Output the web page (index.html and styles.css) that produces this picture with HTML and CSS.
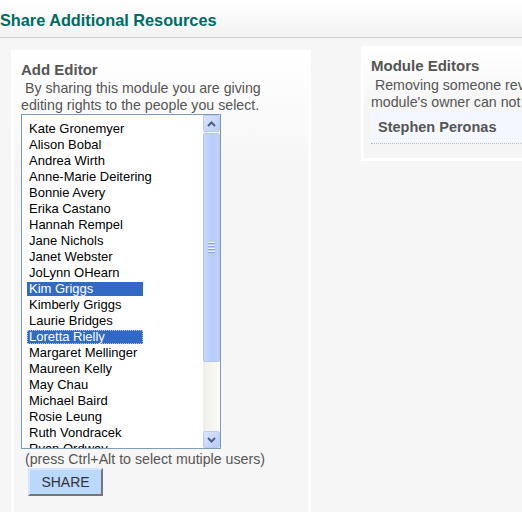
FILE: index.html
```html
<!DOCTYPE html>
<html>
<head>
<meta charset="utf-8">
<link rel="stylesheet" href="styles.css">
</head>
<body>
<header class="head">
  <h1 class="title">Share Additional Resources</h1>
</header>
<div class="main">
  <section class="panel panel-left">
    <h2 class="panel-title">Add Editor</h2>
    <p class="panel-text">&nbsp;By sharing this module you are giving editing rights to the people you select.</p>
    <div class="listbox">
      <ul class="options">
        <li class="opt"><span>Kate Gronemyer</span></li>
        <li class="opt"><span>Alison Bobal</span></li>
        <li class="opt"><span>Andrea Wirth</span></li>
        <li class="opt"><span>Anne-Marie Deitering</span></li>
        <li class="opt"><span>Bonnie Avery</span></li>
        <li class="opt"><span>Erika Castano</span></li>
        <li class="opt"><span>Hannah Rempel</span></li>
        <li class="opt"><span>Jane Nichols</span></li>
        <li class="opt"><span>Janet Webster</span></li>
        <li class="opt"><span>JoLynn OHearn</span></li>
        <li class="opt selected"><span>Kim Griggs</span></li>
        <li class="opt"><span>Kimberly Griggs</span></li>
        <li class="opt"><span>Laurie Bridges</span></li>
        <li class="opt selected focused"><span>Loretta Rielly</span></li>
        <li class="opt"><span>Margaret Mellinger</span></li>
        <li class="opt"><span>Maureen Kelly</span></li>
        <li class="opt"><span>May Chau</span></li>
        <li class="opt"><span>Michael Baird</span></li>
        <li class="opt"><span>Rosie Leung</span></li>
        <li class="opt"><span>Ruth Vondracek</span></li>
        <li class="opt"><span>Ryan Ordway</span></li>
      </ul>
      <div class="scrollbar">
        <div class="sb-btn">
          <svg width="9" height="6" viewBox="0 0 9 6"><path d="M1 5 L4.5 1.5 L8 5" fill="none" stroke="#4d6185" stroke-width="2"/></svg>
        </div>
        <div class="sb-thumb">
          <div class="grip"><i></i><i></i><i></i><i></i></div>
        </div>
        <div class="sb-track"></div>
        <div class="sb-btn">
          <svg width="9" height="6" viewBox="0 0 9 6"><path d="M1 1 L4.5 4.5 L8 1" fill="none" stroke="#4d6185" stroke-width="2"/></svg>
        </div>
      </div>
    </div>
    <p class="hint">&nbsp;(press Ctrl+Alt to select mutiple users)</p>
    <button class="share-btn">SHARE</button>
  </section>
  <section class="panel panel-right">
    <h2 class="panel-title">Module Editors</h2>
    <p class="panel-text nowrap">&nbsp;Removing someone revokes their editing rights. The<br>module's owner can not be removed.</p>
    <div class="editor">Stephen Peronas</div>
  </section>
</div>
</body>
</html>
```
FILE: styles.css
```css
html, body {
  margin: 0;
  padding: 0;
}
body {
  width: 522px;
  height: 512px;
  overflow: hidden;
  background: #f6f6f6;
  font-family: "Liberation Sans", Arial, sans-serif;
  color: #555;
}
.head {
  height: 38px;
  box-sizing: border-box;
  padding-top: 10px;
  background: linear-gradient(#ffffff, #f2f2f2);
  border-bottom: 1px solid #cfcfcf;
}
.title {
  margin: 0;
  font-size: 16.3px;
  line-height: 20px;
  font-weight: bold;
  color: #006b66;
}
.main {
  display: flex;
  align-items: flex-start;
  padding-left: 11px;
}
.panel {
  box-sizing: border-box;
  border: 3px solid #fff;
  background: linear-gradient(#ffffff, #f6f6f6 110px);
  padding: 8px 7px 14px 7px;
}
.panel-left {
  width: 300px;
  height: 480px;
  margin-top: 12px;
  flex: none;
}
.panel-right {
  width: 320px;
  margin-top: 8px;
  margin-left: 50px;
  flex: none;
  background: linear-gradient(#ffffff, #f5f5f5 60px);
}
.panel-title {
  margin: 0 0 2px;
  font-size: 15px;
  line-height: 17px;
  font-weight: bold;
  color: #555;
}
.panel-text {
  margin: 0;
  font-size: 14.2px;
  line-height: 17px;
  color: #555;
}
.nowrap {
  white-space: nowrap;
}
.listbox {
  margin-top: 0;
  width: 200px;
  height: 335px;
  box-sizing: border-box;
  border: 1px solid #7f9db9;
  background: #fff;
  display: flex;
  overflow: hidden;
}
.options {
  list-style: none;
  margin: 0;
  padding: 5px 0 0 5px;
  flex: 1;
  overflow: hidden;
  font-size: 13px;
  color: #000;
}
.opt {
  height: 16px;
  padding-top: 2px;
  box-sizing: border-box;
}
.opt span {
  display: block;
  width: 116px;
  height: 14px;
  line-height: 14px;
  padding-left: 2px;
  box-sizing: border-box;
  white-space: nowrap;
}
.opt.selected span {
  background: #316ac5;
  color: #fff;
}
.opt.focused span {
  outline: 1px dotted #b8c8ee;
  outline-offset: -1px;
}
.scrollbar {
  width: 17px;
  flex: none;
  display: flex;
  flex-direction: column;
  background: linear-gradient(90deg, #eeede5, #fdfdfa);
}
.sb-btn {
  height: 17px;
  box-sizing: border-box;
  border: 1px solid #b8cbf6;
  border-radius: 2px;
  background: linear-gradient(135deg, #dbe5fd, #b9cbf7);
  display: flex;
  align-items: center;
  justify-content: center;
}
.sb-thumb {
  height: 229px;
  margin-top: 1px;
  box-sizing: border-box;
  border: 1px solid #b3c6f4;
  border-radius: 2px;
  background: linear-gradient(90deg, #c6d6fc, #b7cbf8 60%, #c3d3fb);
  display: flex;
  align-items: center;
  justify-content: center;
}
.grip {
  display: flex;
  flex-direction: column;
  gap: 1px;
}
.grip i {
  display: block;
  width: 7px;
  height: 1px;
  background: #eef3fe;
  border-bottom: 1px solid #8ca5e0;
}
.sb-track {
  flex: 1;
}
.hint {
  margin: 0;
  padding-top: 2px;
  font-size: 14.2px;
  line-height: 17px;
  color: #555;
}
.share-btn {
  display: block;
  margin: 0 0 0 7px;
  width: 75px;
  height: 28px;
  box-sizing: border-box;
  border: 2px solid;
  border-color: #d6e6ff #777 #777 #d6e6ff;
  background: #bbd8ff;
  font-family: "Liberation Sans", Arial, sans-serif;
  font-size: 14px;
  color: #333;
  padding: 0;
}
.panel-right .panel-title {
  margin-bottom: 3px;
}
.editor {
  margin-top: 1px;
  height: 32px;
  box-sizing: border-box;
  padding: 7px 7px 0;
  background: #f4f7ff;
  border-bottom: 1px dotted #bbb;
  font-size: 14.5px;
  font-weight: bold;
  line-height: 17px;
  color: #555;
}
```
